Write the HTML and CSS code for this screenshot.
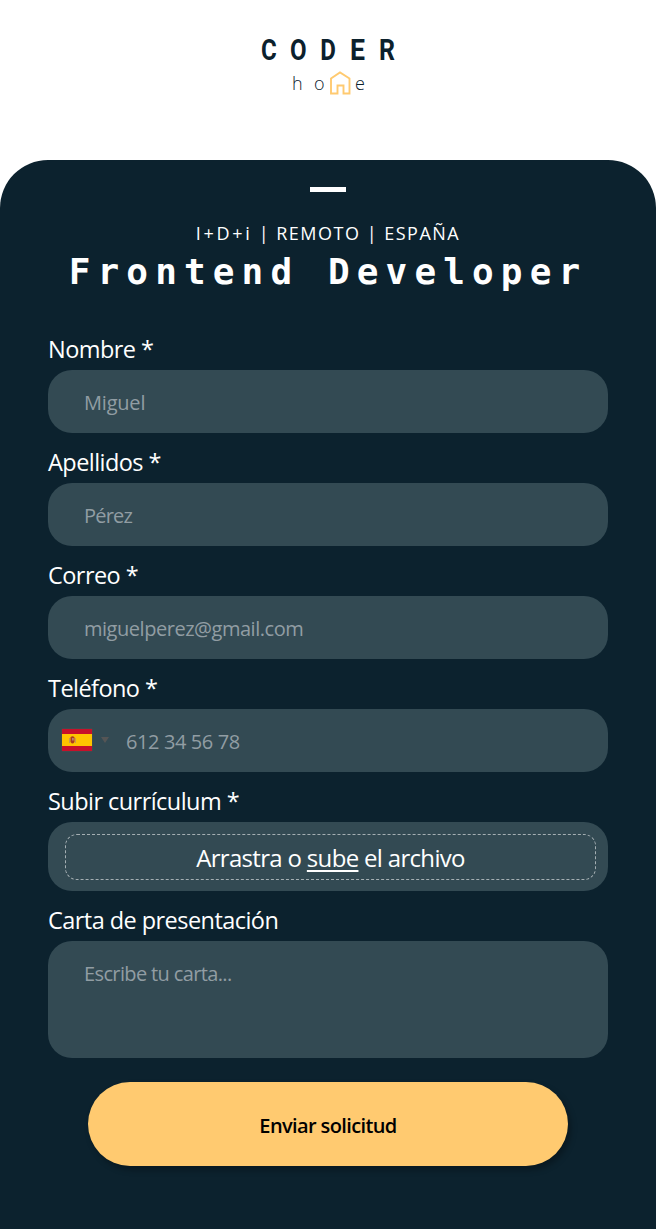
FILE: index.html
```html
<!DOCTYPE html>
<html lang="es">
<head>
<meta charset="utf-8">
<title>Coder Home - Frontend Developer</title>
<link rel="stylesheet" href="styles.css">
</head>
<body>
<header class="header">
  <svg class="logo" width="150" height="70" viewBox="0 0 150 70" role="img" aria-label="Coder home">
    <g class="logo-name">
      <text transform="translate(15.8 30) scale(.83 1)" text-anchor="middle">C</text>
      <text transform="translate(45.3 30) scale(.83 1)" text-anchor="middle">O</text>
      <text transform="translate(75.1 30) scale(.83 1)" text-anchor="middle">D</text>
      <text transform="translate(104.4 30) scale(.92 1)" text-anchor="middle">E</text>
      <text transform="translate(134 30) scale(.86 1)" text-anchor="middle">R</text>
    </g>
    <g class="logo-sub">
      <text x="39" y="60">h</text>
      <text x="61" y="60">o</text>
      <text x="102" y="60">e</text>
    </g>
    <path d="M78 63.5V48.5L87 42.5L96.5 48.5V63.5H90.5V55.5H84.5V63.5Z" fill="none" stroke="#ffca70" stroke-width="1.9"/>
  </svg>
</header>
<main class="panel">
  <div class="handle"></div>
  <p class="meta"><span class="area">I+D+i</span> | REMOTO | ESPAÑA</p>
  <h1 class="title">Frontend Developer</h1>
  <form class="form">
    <div class="field">
      <label class="label" for="name">Nombre *</label>
      <input class="control name" id="name" type="text" placeholder="Miguel">
    </div>
    <div class="field">
      <label class="label" for="surname">Apellidos *</label>
      <input class="control surname" id="surname" type="text" placeholder="Pérez">
    </div>
    <div class="field">
      <label class="label" for="mail">Correo *</label>
      <input class="control" id="mail" type="email" placeholder="miguelperez@gmail.com">
    </div>
    <div class="field">
      <label class="label" for="phone">Teléfono *</label>
      <div class="control phone">
        <svg class="flag" width="32" height="24" viewBox="0 0 32 24">
          <rect x=".5" y=".5" width="31" height="23" rx="1" fill="#4b5051"/>
          <rect x="1" y="1" width="30" height="22" fill="#c8102a"/>
          <rect x="1" y="6" width="30" height="12" fill="#ffc400"/>
          <path d="M8 10h1v5H8zM14 10h1v5h-1z" fill="#c99a50"/>
          <path d="M9.5 9.2q2-2 4 0v4.8q-2 3-4 0z" fill="#ad3a20"/>
          <path d="M11 10h1.8v2.6H11z" fill="#b98276"/>
        </svg>
        <svg class="caret" width="8" height="6" viewBox="0 0 8 6"><path d="M0 0H8L4 6Z" fill="#555"/></svg>
        <input class="phone-input" id="phone" type="tel" placeholder="612 34 56 78">
      </div>
    </div>
    <div class="field">
      <span class="label">Subir currículum *</span>
      <div class="control upload">
        <div class="drop">Arrastra o&nbsp;<span class="link">sube</span>&nbsp;el archivo</div>
      </div>
    </div>
    <div class="field">
      <label class="label" for="letter">Carta de presentación</label>
      <textarea class="control letter" id="letter" placeholder="Escribe tu carta..."></textarea>
    </div>
    <button class="submit" type="button">Enviar solicitud</button>
  </form>
</main>
</body>
</html>
```
FILE: styles.css
```css
* { box-sizing: border-box; }
body {
  margin: 0;
  background: #fff;
  font-family: "Open Sans", "Noto Sans", sans-serif;
}
.header {
  height: 160px;
  padding-top: 30px;
  display: flex;
  justify-content: center;
  align-items: flex-start;
}
.logo { display: block; }
.logo-name { font: 700 29px Roboto, sans-serif; fill: #0c212d; }
.logo-sub { font: 300 18px "Open Sans", sans-serif; fill: #0c212d; }
.panel {
  height: 1069px;
  padding: 27px 48px 0;
  background: #0c222e;
  border-radius: 48px 48px 0 0;
  color: #fff;
  display: flex;
  flex-direction: column;
}
.handle { width: 36px; height: 4.5px; background: #fff; align-self: center; }
.meta {
  margin: 28px 0 0;
  font-size: 18px;
  line-height: 26px;
  letter-spacing: 1.5px;
  text-align: center;
  white-space: nowrap;
}
.area { letter-spacing: 2.7px; }
.title {
  margin: 2px 0 0;
  font: 700 36px/48px "DejaVu Sans Mono", monospace;
  letter-spacing: 7.13px;
  text-align: center;
  white-space: nowrap;
}
.form { margin-top: 37px; display: flex; flex-direction: column; gap: 13px; }
.field { display: flex; flex-direction: column; gap: 5px; }
.label { font-size: 23.5px; line-height: 32px; letter-spacing: -.55px; }
.control {
  width: 100%;
  height: 63px;
  padding: 3px 36px 0;
  border: 0;
  border-radius: 24px;
  background: #334a53;
  font: 400 20px "Open Sans", sans-serif;
  letter-spacing: -.47px;
  color: #fff;
  outline: 0;
}
.name { letter-spacing: -.2px; }
.surname { letter-spacing: -.8px; }
.control::placeholder, .phone-input::placeholder { color: #919da3; opacity: 1; }
.phone { display: flex; align-items: center; padding: 0 13px; letter-spacing: -.4px; }
.caret { margin-left: 8px; }
.phone-input {
  flex: 1;
  min-width: 0;
  margin-left: 17px;
  padding: 3px 0 0;
  border: 0;
  background: none;
  font: inherit;
  letter-spacing: inherit;
  color: #fff;
  outline: 0;
}
.upload { height: 69px; padding: 12px 12px 11px 17px; }
.drop {
  height: 100%;
  display: flex;
  align-items: center;
  justify-content: center;
  padding-top: 2px;
  border: 1px dashed #a5afb3;
  border-radius: 12px;
  font-size: 24px;
  letter-spacing: -.68px;
}
.link { text-decoration: underline; text-decoration-thickness: 2px; text-underline-offset: 3px; }
.letter { height: 117px; padding-top: 19px; resize: none; display: block; letter-spacing: -.63px; }
.submit {
  width: 480px;
  height: 84px;
  margin-top: 11px;
  padding: 4px 0 0;
  align-self: center;
  border: 0;
  border-radius: 42px;
  background: #ffca70;
  box-shadow: 3px 4px 6px rgba(0, 0, 0, .3);
  font: 600 20px "Open Sans", sans-serif;
  letter-spacing: -.62px;
  color: #000;
}
```
